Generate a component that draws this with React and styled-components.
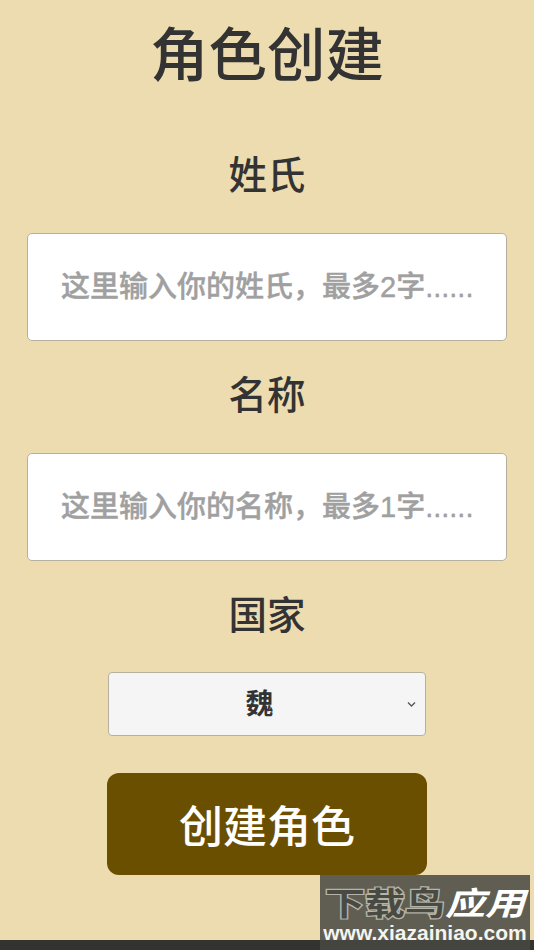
import React from "react";
import styled, { createGlobalStyle } from "styled-components";

const Global = createGlobalStyle`
  html, body { margin: 0; padding: 0; background: #ecdcb0; }
  #root { min-height: 950px; }
`;
const FONT = `"Liberation Sans", "Noto Sans CJK SC", sans-serif`;
const Page = styled.div`
  position: relative; width: 534px; height: 950px; overflow: hidden; box-sizing: border-box;
  background: #ecdcb0; padding: 18px 27px 0; display: flex; flex-direction: column; align-items: center;
  font-family: ${FONT}; color: #333;
`;
const Title = styled.h1`margin: 0 0 57px; font-size: 58.5px; line-height: 76px; font-weight: 500;`;
const Label = styled.label`font-size: 38.5px; line-height: 50px; font-weight: 500; margin-bottom: 32px;`;
const Input = styled.input`
  box-sizing: border-box; width: 100%; height: 108px; margin-bottom: 30px; padding: 0 33px; font: 500 29px ${FONT};
  border: 1px solid #b5b0a0; border-radius: 5px; background: #fff; color: #333;
  &::placeholder { color: #a0a0a0; opacity: 1; -webkit-text-stroke: 0.4px #a0a0a0; }
`;
const SelectWrap = styled.div`position: relative; width: 318px; height: 64px; margin-top: -1px;`;
const Select = styled.select`
  appearance: none; box-sizing: border-box; width: 100%; height: 100%; padding: 0 15px 0 0; font: 700 28px ${FONT}; text-align: center; color: #333;
  background: #f5f5f5; border: 1px solid #b5b0a0; border-radius: 4px;
`;
const Chevron = styled.svg`position: absolute; right: 9px; top: 29px; width: 11px; height: 7px; pointer-events: none;`;
const Button = styled.button`
  width: 320px; height: 102px; margin-top: 37px; border: 0; border-radius: 12px; background: #6b4f00; color: #fff; font: 500 44px ${FONT};
`;
const Footer = styled.div`position: absolute; left: 0; right: 0; bottom: 0; height: 10px; background: #333330;`;
const Mark = styled.div`
  position: absolute; right: 4px; bottom: 0; width: 210px; height: 75px; padding-top: 9px; box-sizing: border-box;
  background: rgba(72,72,66,.86); color: #f4f4f0; display: flex; flex-direction: column; align-items: center;
  font-family: ${FONT}; font-weight: 700;
`;
const MarkTop = styled.div`display: flex; font-size: 40px; line-height: 40px; white-space: nowrap; transform: scaleY(.8);`;
const MarkOutline = styled.span`color: #4a4a43; -webkit-text-stroke: 3px #b5b4a8; paint-order: stroke fill;`;
const MarkItalic = styled.span`font-style: italic; color: #fff;`;
const MarkUrl = styled.div`font-size: 21px; line-height: 24px; margin-top: -3px;`;

export default function App() {
  return (
    <Page>
      <Global />
      <Title>角色创建</Title>
      <Label>姓氏</Label>
      <Input placeholder="这里输入你的姓氏，最多2字......" />
      <Label>名称</Label>
      <Input placeholder="这里输入你的名称，最多1字......" />
      <Label>国家</Label>
      <SelectWrap>
        <Select defaultValue="魏"><option>魏</option><option>蜀</option><option>吴</option></Select>
        <Chevron viewBox="0 0 11 7"><path d="M2 1.5 L5.5 5 L9 1.5" fill="none" stroke="#555" strokeWidth="1.3" /></Chevron>
      </SelectWrap>
      <Button>创建角色</Button>
      <Footer />
      <Mark>
        <MarkTop><MarkOutline>下载鸟</MarkOutline><MarkItalic>应用</MarkItalic></MarkTop>
        <MarkUrl>www.xiazainiao.com</MarkUrl>
      </Mark>
    </Page>
  );
}
